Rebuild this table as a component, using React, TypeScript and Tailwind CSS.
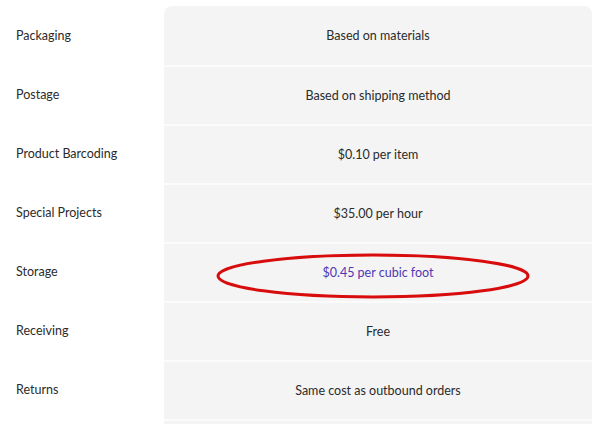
const rows = [
  { label: 'Packaging', value: 'Based on materials' },
  { label: 'Postage', value: 'Based on shipping method' },
  { label: 'Product Barcoding', value: '$0.10 per item' },
  { label: 'Special Projects', value: '$35.00 per hour' },
  { label: 'Storage', value: '$0.45 per cubic foot', highlight: true },
  { label: 'Receiving', value: 'Free' },
  { label: 'Returns', value: 'Same cost as outbound orders' },
  { label: '', value: '' },
];

export default function App() {
  return (
    <div className="w-[600px] h-[424px] overflow-hidden bg-white pt-[6px] pr-[8px] text-[12.5px] text-[#2b2b2b] font-['Lato','Liberation_Sans',sans-serif]">
      {rows.map((row, i) => (
        <div key={i} className="flex h-[59px]">
          <div className="w-[164px] shrink-0 flex items-center pl-[16px] pt-[2px]">{row.label}</div>
          <div
            className={`relative flex-1 flex items-center justify-center bg-[#f4f4f4] pt-[2px] ${
              i === 0 ? 'rounded-t-[8px]' : 'border-t-2 border-[#fbfbfb]'
            }`}
          >
            {row.highlight ? (
              <>
                <span className="text-[#4f36b4]">{row.value}</span>
                <svg className="absolute left-[52px] top-[9px]" width="316" height="46" viewBox="0 0 316 46">
                  <ellipse cx="157" cy="23" rx="155" ry="21" fill="none" stroke="#d80c0c" strokeWidth="3" />
                </svg>
              </>
            ) : (
              <span>{row.value}</span>
            )}
          </div>
        </div>
      ))}
    </div>
  );
}
